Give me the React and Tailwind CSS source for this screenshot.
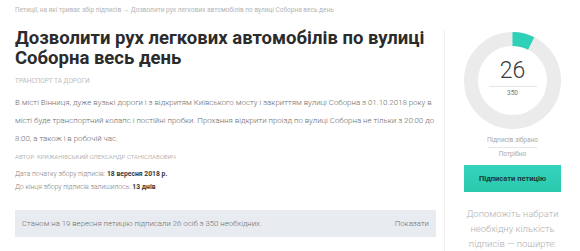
import React from "react";

function Ring() {
  const size = 97;
  const stroke = 14;
  const r = (size - stroke) / 2;
  const c = 2 * Math.PI * r;
  const frac = 26 / 350;
  return (
    <svg width={size} height={size} viewBox={`0 0 ${size} ${size}`} className="block">
      <circle cx={size / 2} cy={size / 2} r={r} fill="none" stroke="#ebebeb" strokeWidth={stroke} />
      <circle
        cx={size / 2}
        cy={size / 2}
        r={r}
        fill="none"
        stroke="#2fd0b8"
        strokeWidth={stroke}
        strokeDasharray={`${c * frac} ${c}`}
        transform={`rotate(-90 ${size / 2} ${size / 2})`}
      />
    </svg>
  );
}

export default function App() {
  return (
    <div className="w-[580px] h-[251px] overflow-hidden bg-white flex" style={{ fontFamily: "Roboto, 'Noto Sans', sans-serif" }}>
      <div className="w-[444px] shrink-0 pl-[15px] pr-[8px]">
        <div className="pt-[6px] text-[6.5px] leading-[9px] text-[#b4b4b4] whitespace-nowrap">
          <span>Петиції, на які триває збір підписів</span>
          <span> → Дозволити рух легкових автомобілів по вулиці Соборна весь день</span>
        </div>
        <h1 className="mt-[13px] text-[18.5px] leading-[20px] font-bold text-[#2b2b2b]">
          Дозволити рух легкових автомобілів по вулиці<br />Соборна весь день
        </h1>
        <div className="mt-[9px] text-[6.5px] leading-[9px] text-[#bdbdbd] uppercase">Транспорт та дороги</div>
        <p className="mt-[8px] text-[7.9px] leading-[18px] text-[#6b6b6b] font-light">
          В місті Вінниця, дуже вузькі дороги і з відкритям Київського мосту і закриттям вулиці Соборна з 01.10.2018 року в місті буде транспортний колапс і постійні пробки. Прохання відкрити проізд по вулиці Соборна не тільки з 20:00 до 8:00, а також і в робочій час.
        </p>
        <div className="mt-[4px] text-[6px] leading-[9px] text-[#b7b7b7] uppercase">Автор: Крижанівський Олександр Станіславович</div>
        <div className="mt-[7px] text-[6.8px] leading-[13px] text-[#808080] font-light">
          <div>Дата початку збору підписів: <b className="font-bold text-[#3a3a3a]">18 вересня 2018 р.</b></div>
          <div>До кінця збору підписів залишилось: <b className="font-bold text-[#3a3a3a]">13 днів</b></div>
        </div>
        <div className="mt-[16px] h-[27px] bg-[#e8ebef] flex items-center justify-between pl-[7px] pr-[7px] text-[7.8px] text-[#707070] font-light">
          <span>Станом на 19 вересня петицію підписали 26 осіб з 350 необхідних.</span>
          <span>Показати</span>
        </div>
      </div>
      <div className="w-px bg-[#eeeeee] mt-[30px] shrink-0" />
      <div className="flex-1 flex flex-col items-center pt-[32px]">
        <div className="relative w-[97px] h-[97px]">
          <Ring />
          <div className="absolute inset-0 flex flex-col items-center justify-center">
            <div className="text-[23px] leading-[24px] font-light text-[#3a3a3a] mt-[-4px]">26</div>
            <div className="w-[48px] h-px bg-[#e6e6e6] mt-[3px]" />
            <div className="text-[6.5px] leading-[9px] text-[#777] mt-[2px]">350</div>
          </div>
        </div>
        <div className="mt-[7px] text-[6.5px] leading-[9px] text-[#a8a8a8]">Підписів зібрано</div>
        <div className="w-[49px] h-px bg-[#e6e6e6] mt-[2px]" />
        <div className="mt-[2px] text-[6.5px] leading-[9px] text-[#a8a8a8]">Потрібно</div>
        <div className="mt-[6px] w-[97px] h-[29px] flex items-center justify-center bg-gradient-to-b from-[#34d3be] to-[#2bc9ac] text-[7.5px] font-bold text-[#1d3b36]">
          Підписати петицію
        </div>
        <div className="mt-[14px] w-[110px] text-center text-[9.5px] leading-[15px] text-[#b0b0b0] font-light">
          Допоможіть набрати необхідну кількість підписів — поширте:
        </div>
      </div>
    </div>
  );
}
